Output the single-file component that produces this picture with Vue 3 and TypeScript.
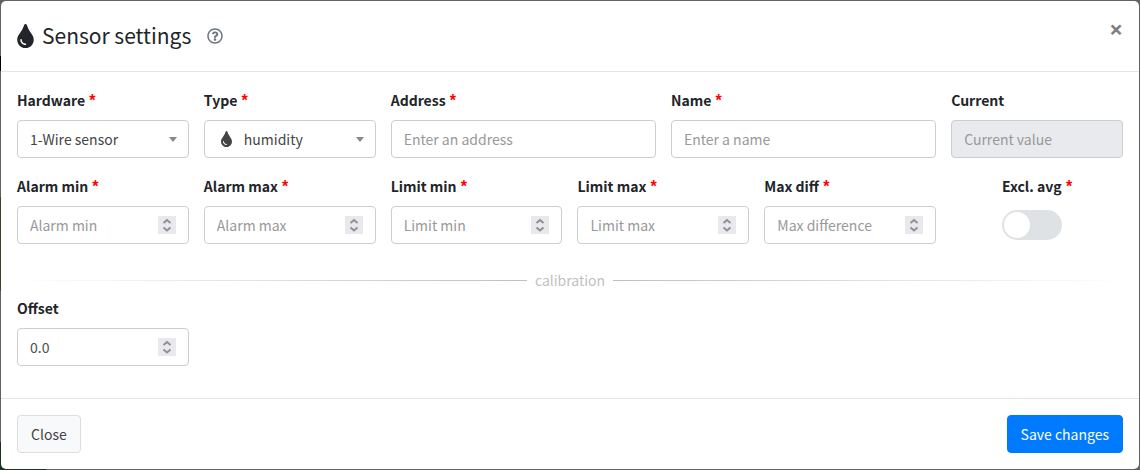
<script setup lang="ts">
import { reactive } from 'vue'

interface Field {
  id: string
  label: string
  placeholder: string
  span: string
  required?: boolean
  disabled?: boolean
}

type Key = 'address' | 'name' | 'current' | 'alarmMin' | 'alarmMax' | 'limitMin' | 'limitMax' | 'maxDiff' | 'offset'

const DROP =
  'M205.22 22.09c-7.94-28.78-49.44-30.12-58.44 0C100.01 179.85 0 222.72 0 333.91 0 432.35 78.72 512 176 512s176-79.65 176-178.09c0-111.75-99.79-153.34-146.78-311.82zM176 448c-61.75 0-112-50.25-112-112 0-8.84 7.16-16 16-16s16 7.16 16 16c0 44.11 35.89 80 80 80 8.84 0 16 7.16 16 16s-7.16 16-16 16z'

const textFields: (Field & { id: Key })[] = [
  { id: 'address', label: 'Address', placeholder: 'Enter an address', span: 'wide', required: true },
  { id: 'name', label: 'Name', placeholder: 'Enter a name', span: 'wide', required: true },
  { id: 'current', label: 'Current', placeholder: 'Current value', span: 'narrow', disabled: true },
]

const numberFields: (Field & { id: Key })[] = [
  { id: 'alarmMin', label: 'Alarm min', placeholder: 'Alarm min', span: 'narrow', required: true },
  { id: 'alarmMax', label: 'Alarm max', placeholder: 'Alarm max', span: 'narrow', required: true },
  { id: 'limitMin', label: 'Limit min', placeholder: 'Limit min', span: 'narrow', required: true },
  { id: 'limitMax', label: 'Limit max', placeholder: 'Limit max', span: 'narrow', required: true },
  { id: 'maxDiff', label: 'Max diff', placeholder: 'Max difference', span: 'narrow', required: true },
]

const offsetFields: (Field & { id: Key })[] = [
  { id: 'offset', label: 'Offset', placeholder: 'Offset', span: 'narrow' },
]

const form = reactive({
  hardware: '1-Wire sensor',
  type: 'humidity',
  exclude: false,
})

const values = reactive<Record<Key, string>>({
  address: '', name: '', current: '', alarmMin: '', alarmMax: '',
  limitMin: '', limitMax: '', maxDiff: '', offset: '0.0',
})

function step(id: Key, delta: number) {
  values[id] = ((parseFloat(values[id]) || 0) + delta).toFixed(1)
}
</script>

<template>
  <div class="backdrop">
    <section class="modal" role="dialog" aria-labelledby="dialog-title">
      <header class="modal-header">
        <svg class="title-icon" viewBox="0 0 352 512" aria-hidden="true"><path :d="DROP" /></svg>
        <h1 id="dialog-title">Sensor settings</h1>
        <button type="button" class="help" aria-label="Help">
          <svg viewBox="0 0 512 512" aria-hidden="true">
            <path d="M256 8C119.043 8 8 119.083 8 256c0 136.997 111.043 248 248 248s248-111.003 248-248C504 119.083 392.957 8 256 8zm0 448c-110.532 0-200-89.431-200-200 0-110.495 89.472-200 200-200 110.491 0 200 89.471 200 200 0 110.53-89.431 200-200 200zm107.244-255.2c0 67.052-72.421 68.084-72.421 92.863V300c0 6.627-5.373 12-12 12h-45.647c-6.627 0-12-5.373-12-12v-8.659c0-35.745 27.1-50.034 47.579-61.516 17.561-9.845 28.324-16.541 28.324-29.579 0-17.246-21.999-28.693-39.784-28.693-23.189 0-33.894 10.977-48.942 29.969-4.057 5.12-11.46 6.071-16.666 2.124l-27.824-21.098c-5.107-3.872-6.251-11.066-2.644-16.363C184.846 131.491 214.94 112 261.794 112c49.071 0 101.45 38.304 101.45 88.8zM298 368c0 23.159-18.841 42-42 42s-42-18.841-42-42 18.841-42 42-42 42 18.841 42 42z" />
          </svg>
        </button>
        <button type="button" class="dismiss" aria-label="Close dialog">×</button>
      </header>

      <form class="modal-body" @submit.prevent>
        <div class="row">
          <div class="field narrow">
            <label for="hardware">Hardware <span class="req">*</span></label>
            <div class="control">
              <select id="hardware" v-model="form.hardware">
                <option>1-Wire sensor</option>
              </select>
              <span class="caret"></span>
            </div>
          </div>
          <div class="field narrow">
            <label for="type">Type <span class="req">*</span></label>
            <div class="control">
              <svg class="type-icon" viewBox="0 0 352 512" aria-hidden="true"><path :d="DROP" /></svg>
              <select id="type" v-model="form.type">
                <option>humidity</option>
              </select>
              <span class="caret"></span>
            </div>
          </div>
          <div v-for="f in textFields" :key="f.id" class="field" :class="f.span">
            <label :for="f.id">{{ f.label }} <span v-if="f.required" class="req">*</span></label>
            <div class="control" :class="{ disabled: f.disabled }">
              <input :id="f.id" v-model="values[f.id]" type="text" :placeholder="f.placeholder" :disabled="f.disabled" />
            </div>
          </div>
        </div>

        <div class="row">
          <div v-for="f in numberFields" :key="f.id" class="field" :class="f.span">
            <label :for="f.id">{{ f.label }} <span class="req">*</span></label>
            <div class="control">
              <input :id="f.id" v-model="values[f.id]" type="text" inputmode="decimal" :placeholder="f.placeholder" />
              <span class="spinner">
                <button type="button" :aria-label="`Increase ${f.label}`" @click="step(f.id, 1)">
                  <svg viewBox="0 0 18 9" aria-hidden="true"><path d="M5.500 7 9 4l3.500 3" /></svg>
                </button>
                <button type="button" :aria-label="`Decrease ${f.label}`" @click="step(f.id, -1)">
                  <svg viewBox="0 0 18 9" aria-hidden="true"><path d="M5.500 2.500 9 5.500l3.500-3" /></svg>
                </button>
              </span>
            </div>
          </div>
          <div class="field narrow centered">
            <div>
              <label for="exclude">Excl. avg <span class="req">*</span></label>
              <input id="exclude" v-model="form.exclude" class="switch" type="checkbox" role="switch" />
            </div>
          </div>
        </div>

        <div class="separator"><span>calibration</span></div>

        <div class="row">
          <div v-for="f in offsetFields" :key="f.id" class="field" :class="f.span">
            <label :for="f.id">{{ f.label }}</label>
            <div class="control">
              <input :id="f.id" v-model="values[f.id]" type="text" inputmode="decimal" :placeholder="f.placeholder" />
              <span class="spinner">
                <button type="button" :aria-label="`Increase ${f.label}`" @click="step(f.id, 0.1)">
                  <svg viewBox="0 0 18 9" aria-hidden="true"><path d="M5.500 7 9 4l3.500 3" /></svg>
                </button>
                <button type="button" :aria-label="`Decrease ${f.label}`" @click="step(f.id, -0.1)">
                  <svg viewBox="0 0 18 9" aria-hidden="true"><path d="M5.500 2.500 9 5.500l3.500-3" /></svg>
                </button>
              </span>
            </div>
          </div>
        </div>
      </form>

      <footer class="modal-footer">
        <button type="button" class="btn light">Close</button>
        <button type="button" class="btn primary">Save changes</button>
      </footer>
    </section>
  </div>
</template>

<style>
body {
  background: #626164;
}
</style>

<style scoped>
.backdrop {
  box-sizing: border-box;
  min-height: 100vh;
  padding: 1px;
  background:
    linear-gradient(to right, #17331a 4%, transparent 4%) bottom / 100% 6% no-repeat,
    linear-gradient(to bottom, transparent 12%, #000 12%, #000 15%, transparent 15%, transparent 42%, #3f4222 42%, #3f4222 62%, transparent 62%) left / 1px 100% no-repeat,
    #626164;
  color: #212529;
  font-family: "Source Sans Pro", "Noto Sans CJK SC", "Noto Sans", sans-serif;
  font-size: 14px;
  line-height: 24px;
}
.modal {
  background: #fff;
  border-radius: 5px;
}
.modal-header {
  display: flex;
  align-items: center;
  min-height: 38px;
  padding: 16px;
  border-bottom: 1px solid #e5e5e5;
}
.title-icon {
  width: 17px;
  height: 24px;
  fill: #212529;
}
h1 {
  margin: 0 16px 0 8px;
  padding-bottom: 2px;
  font-size: 21px;
  font-weight: 400;
  line-height: 36px;
}
button {
  font: inherit;
  cursor: pointer;
}
.help {
  display: flex;
  padding: 0;
  border: 0;
  background: none;
}
.help svg {
  width: 16px;
  height: 16px;
  fill: #6c757d;
}
.dismiss {
  align-self: flex-start;
  margin-left: auto;
  padding: 0;
  border: 0;
  background: none;
  color: #7f7f7f;
  font-family: "Noto Sans", sans-serif;
  font-size: 24px;
  font-weight: 700;
  line-height: 24px;
}
.modal-body {
  padding: 16px;
}
.row {
  display: grid;
  grid-template-columns: repeat(12, minmax(0, 1fr));
  column-gap: 15px;
  margin-bottom: 16px;
}
.narrow {
  grid-column: span 2;
}
.wide {
  grid-column: span 3;
}
.centered {
  display: flex;
  justify-content: center;
}
label {
  display: block;
  margin-bottom: 8px;
  font-weight: 700;
}
.req {
  margin-left: 1px;
  color: #f00;
  font-family: "Liberation Sans", sans-serif;
  font-size: 16px;
  line-height: 16px;
}
.control {
  display: flex;
  align-items: center;
  box-sizing: border-box;
  height: 38px;
  padding: 0 12px;
  border: 1px solid #ccced0;
  border-radius: 4px;
  background: #fff;
}
.control.disabled {
  background: #e8eaed;
}
.control input,
.control select {
  flex: 1;
  min-width: 0;
  height: 24px;
  padding: 0;
  border: 0;
  outline: 0;
  background: transparent;
  color: #495057;
  font: inherit;
  appearance: none;
}
.control input::placeholder {
  color: #999;
  opacity: 1;
}
.control select {
  color: #444;
}
.type-icon {
  width: 11px;
  height: 16px;
  margin: 0 12px 0 4px;
  fill: #444;
}
.caret {
  margin-right: -1px;
  border: 4px solid transparent;
  border-top: 5px solid #888;
  border-bottom: 0;
}
.spinner {
  display: flex;
  flex-direction: column;
  width: 18px;
  background: #e9e9ed;
}
.spinner button {
  display: flex;
  padding: 0;
  border: 0;
  background: none;
}
.spinner svg {
  width: 18px;
  height: 9px;
  fill: none;
  stroke: #8f8f98;
  stroke-width: 2;
}
.switch {
  display: block;
  width: 60px;
  height: 30px;
  margin: 12px 0 0;
  padding: 2px;
  border-radius: 15px;
  background: #dfe2e4;
  appearance: none;
}
.switch::before {
  display: block;
  width: 26px;
  height: 26px;
  border-radius: 50%;
  background: #fff;
  content: "";
}
.switch:checked {
  background: #007bff;
}
.switch:checked::before {
  margin-left: auto;
}
.separator {
  display: flex;
  align-items: center;
  gap: 8px;
  margin: 24px 0 4px;
  color: #bfbfbf;
}
.separator::before,
.separator::after {
  flex: 1;
  height: 1px;
  background: linear-gradient(to right, transparent, #bfbfbf);
  content: "";
}
.separator::after {
  background: linear-gradient(to left, transparent, #bfbfbf);
}
.modal-footer {
  display: flex;
  justify-content: space-between;
  padding: 16px;
  border-top: 1px solid #e5e5e5;
}
.btn {
  padding: 6px 13px;
  border: 1px solid #ddd;
  border-radius: 4px;
  line-height: 24px;
}
.light {
  background: #f8f9fa;
  color: #444;
}
.primary {
  border-color: #007bff;
  background: #007bff;
  color: #fff;
}
</style>
